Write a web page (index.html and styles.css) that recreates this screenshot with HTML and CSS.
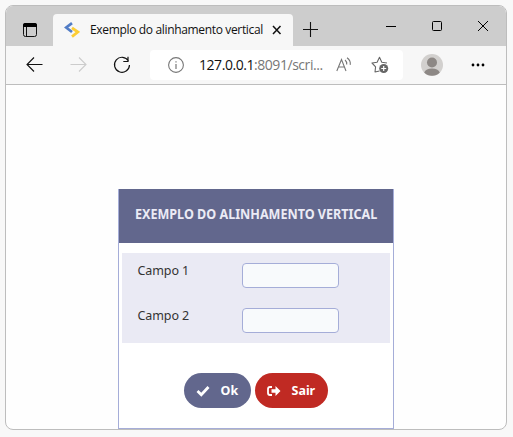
FILE: index.html
```html
<!DOCTYPE html>
<html lang="pt-BR">
<head>
<meta charset="utf-8">
<title>Exemplo do alinhamento vertical</title>
<link rel="stylesheet" href="styles.css">
</head>
<body>
<div class="window">
  <header class="titlebar">
    <svg class="tabs-icon" width="16" height="16" viewBox="0 0 16 16"><rect x="1.500" y="1.500" width="13" height="13" rx="2" fill="none" stroke="#111"/><path d="M1 5V3q0-2 2-2h10q2 0 2 2v2z" fill="#000"/><path d="M4.500 5v9" stroke="#111"/></svg>
    <div class="tab">
      <svg class="logo" width="16" height="16" viewBox="0 0 16 16"><path d="M8 1.200 2.200 5.500 8 10" fill="none" stroke="#527dc6" stroke-width="2.800"/><path d="M8 5.800 13.800 10 8 14.600" fill="none" stroke="#fccd35" stroke-width="2.800"/></svg>
      <span class="tab-title">Exemplo do alinhamento vertical</span>
      <svg class="tab-close" width="10" height="10" viewBox="0 0 10 10"><path d="m1 1 7.500 8M8.500 1 1 9" stroke="#111" stroke-width="1.500"/></svg>
    </div>
    <svg class="plus" width="15" height="15" viewBox="0 0 15 15"><path d="M0 7.500h15M7.500 0v15" stroke="#111" stroke-width="1.100"/></svg>
    <div class="controls">
      <svg width="10" height="10" viewBox="0 0 10 10"><path d="M0 5.500h10" stroke="#000"/></svg>
      <svg width="10" height="10" viewBox="0 0 10 10"><rect x=".5" y=".5" width="9" height="9" rx="1" fill="none" stroke="#000"/></svg>
      <svg width="10" height="10" viewBox="0 0 10 10"><path d="m0 0 10 10M10 0 0 10" stroke="#000"/></svg>
    </div>
  </header>
  <nav class="toolbar">
    <svg class="back" width="17" height="16" viewBox="0 0 17 16"><path d="M16.500 7.500H1M8 .5l-7 7 7 7" fill="none" stroke="#111" stroke-width="1.100"/></svg>
    <svg class="forward" width="17" height="16" viewBox="0 0 17 16"><path d="M.5 7.500H16M9 .5l7 7-7 7" fill="none" stroke="#ccc" stroke-width="1.100"/></svg>
    <svg class="reload" width="18" height="18" viewBox="0 0 18 18"><path d="M15.500 5A7.500 7.500 0 1 0 16.500 9M15 .8v4.700h-4.700" fill="none" stroke="#111" stroke-width="1.200"/></svg>
    <div class="address">
      <svg class="info" width="16" height="16" viewBox="0 0 16 16"><circle cx="8" cy="8" r="7.400" fill="none" stroke="#777" stroke-width="1.100"/><path d="M8 4.200v1.300M8 7v5" stroke="#777" stroke-width="1.200"/></svg>
      <span class="url">127.0.0.1<span class="path">:8091/scri...</span></span>
      <svg class="read" width="16" height="16" viewBox="0 0 16 16"><path d="M.8 14 5.500 2.500 10 14M2.500 10h6M9 3q2 1.500 1.700 4.500M11 .8q4 2.800 3.200 7" fill="none" stroke="#777" stroke-width="1.100"/></svg>
      <svg class="star" width="18" height="18" viewBox="0 0 18 18"><path d="M8.500 15 4 16l.6-5.200L1 7l5.100-.8L8.500 1.200l2.300 5 5.200.8" fill="none" stroke="#666" stroke-width="1.100" stroke-linejoin="round"/><circle cx="12.700" cy="12.500" r="4.500" fill="#666"/><path d="M10.200 12.500h5M12.700 10v5" stroke="#fff" stroke-width="1.200"/></svg>
    </div>
    <svg class="avatar" width="22" height="22" viewBox="0 0 22 22"><circle cx="11" cy="11" r="11" fill="#d2d0ce"/><circle cx="11" cy="8.500" r="5" fill="#8d8885"/><path d="M3.200 18.500Q5 14.500 11 14.500t7.800 4A11 11 0 0 1 3.200 18.500" fill="#8d8885"/></svg>
    <svg class="more" width="14" height="4" viewBox="0 0 14 4"><circle cx="2" cy="2" r="1.400"/><circle cx="7" cy="2" r="1.400"/><circle cx="12" cy="2" r="1.400"/></svg>
  </nav>
  <main class="page">
    <form class="form">
      <h1 class="heading"><span>EXEMPLO DO ALINHAMENTO VERTICAL</span></h1>
      <div class="fields">
        <label class="row"><span class="label">Campo 1</span><input class="input" type="text"></label>
        <label class="row"><span class="label">Campo 2</span><input class="input" type="text"></label>
      </div>
      <div class="actions">
        <button class="btn ok" type="button"><svg width="14" height="12" viewBox="0 0 14 12"><path d="m1.500 6 3.800 3.700L12.500 2" fill="none" stroke="#fff" stroke-width="2.800"/></svg><span>Ok</span></button>
        <button class="btn exit" type="button"><svg width="14" height="12" viewBox="0 0 14 12"><path d="M5 2H3Q1 2 1 4v4q0 2 2 2h2" fill="none" stroke="#fff" stroke-width="1.800"/><path d="M4.500 4.200h4V1l5 5-5 5V7.800h-4z" fill="#fff"/></svg><span>Sair</span></button>
      </div>
    </form>
  </main>
</div>
</body>
</html>
```
FILE: styles.css
```css
* { box-sizing: border-box; }
body {
  margin: 0;
  height: 437px;
  padding: 5px 6px 7px 5px;
  overflow: hidden;
  background: #f8f8f8;
  font-family: "Noto Sans", "Open Sans", sans-serif;
}
svg { display: block; flex: none; }
.window {
  width: 502px;
  height: 425px;
  border: 1px solid #bdbdbd;
  border-radius: 8px;
  overflow: hidden;
  background: #fefefe;
}
.titlebar { display: flex; height: 40px; background: #cdcdcd; }
.tabs-icon { margin: 16px 0 0 16px; }
.tab {
  display: flex;
  align-items: center;
  width: 240px;
  height: 32px;
  margin: 8px 0 0 15px;
  padding-left: 11px;
  border-radius: 4px 4px 0 0;
  background: #f7f7f7;
}
.tab-title {
  width: 174px;
  margin-left: 10px;
  font: 12px/18px "Open Sans", sans-serif;
  letter-spacing: -0.34px;
  white-space: nowrap;
  color: #111;
}
.tab-close { margin-left: 8px; }
.plus { margin: 16px 0 0 10px; }
.controls { display: flex; gap: 36px; margin: 15px 0 0 68px; }
.toolbar {
  display: flex;
  align-items: center;
  height: 39px;
  border-bottom: 1px solid #bdbdbd;
  background: #f7f7f7;
}
.back { margin-left: 20px; }
.forward { margin-left: 27px; }
.reload { margin-left: 26px; }
.address {
  display: flex;
  align-items: center;
  width: 253px;
  height: 30px;
  margin-left: 19px;
  padding-left: 18px;
  border-radius: 4px;
  background: #fff;
}
.url {
  width: 124px;
  margin-left: 15px;
  font: 14px/20px "Open Sans", sans-serif;
  letter-spacing: -0.45px;
  white-space: nowrap;
  color: #111;
}
.path { color: #777; }
.read { margin-left: 13px; }
.star { margin-left: 19px; }
.avatar { margin-left: 18px; }
.more { margin-left: 28px; }
.page { display: flex; justify-content: center; padding-top: 104px; }
.form {
  width: 276px;
  height: 240px;
  margin-right: 1px;
  border: 1px solid #a5add8;
  border-top: 0;
  background: #fff;
}
.heading {
  display: flex;
  align-items: center;
  height: 54px;
  margin: 0;
  padding: 0 0 6px 16px;
  background: #62678d;
  color: #ebebf5;
  font-size: 14px;
  font-weight: 700;
  white-space: nowrap;
}
.heading span { transform: scaleX(0.897); transform-origin: left center; }
.fields { height: 90px; margin: 10px 3px 0 3px; background: #eaeaf4; }
.row { display: flex; height: 45px; padding: 10px 0 0 16px; }
.label {
  width: 104px;
  font-size: 12.5px;
  line-height: 16px;
  letter-spacing: -0.1px;
  color: #333;
}
.input {
  width: 97px;
  height: 25px;
  border: 1px solid #a5add8;
  border-radius: 4px;
  background: #f8fafc;
}
.actions { display: flex; gap: 4px; margin: 30px 0 0 65px; }
.btn {
  display: flex;
  align-items: center;
  height: 35px;
  padding: 0 0 0 12px;
  border: 0;
  border-radius: 18px;
  color: #fff;
  font: 700 12.5px/18px "Noto Sans", sans-serif;
}
.btn span { margin-left: 11px; }
.ok { width: 67px; background: #62678d; }
.exit { width: 73px; background: #c02a23; }
```
